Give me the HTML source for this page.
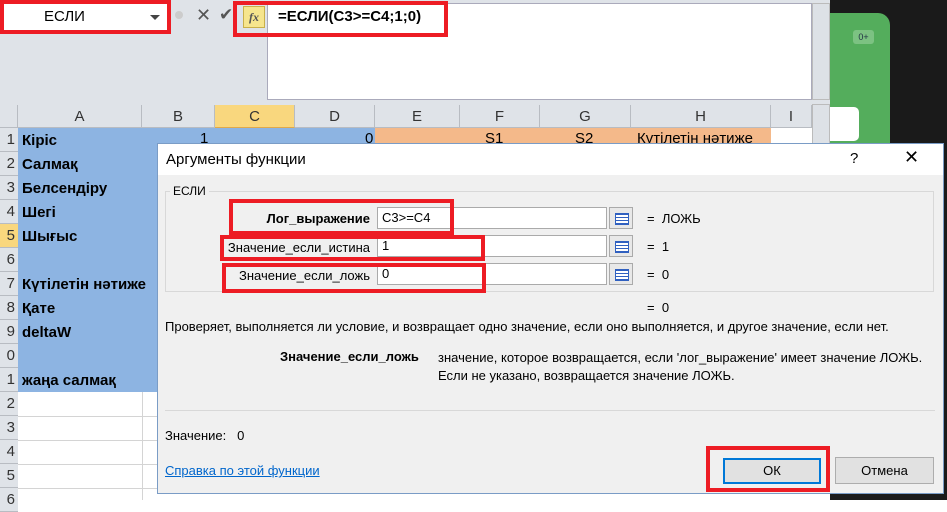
<!DOCTYPE html>
<html><head><meta charset="utf-8"><style>
*{box-sizing:border-box;margin:0;padding:0}
body{width:947px;height:500px;overflow:hidden;position:relative;background:#fff;font-family:"Liberation Sans","DejaVu Sans",sans-serif;font-size:13px}
.a{position:absolute}
.red{position:absolute;border:4px solid #ed1c24}
.ch{position:absolute;top:105px;height:23px;background:#dfe3e8;border-right:1px solid #b8bcc2;border-bottom:1px solid #b8bcc2;text-align:center;line-height:23px;font-size:15px;color:#333}
.rh{position:absolute;left:0;width:18px;height:24px;background:#dfe3e8;border-bottom:1px solid #b8bcc2;font-size:15px;line-height:24px;color:#333;text-align:right;padding-right:3px}
.cell{position:absolute;font-weight:bold;font-size:15px;left:22px}
.lab{position:absolute;font-size:13px;text-align:right}
.inp{position:absolute;background:#fff;border:1px solid #aaa;height:22px;font-size:13px;line-height:20px;padding-left:4px}
.rb{position:absolute;width:24px;height:22px;border:1px solid #aaa;background:#e8e8e8}
.rb:after{content:"";position:absolute;left:5px;top:5px;width:12px;height:10px;background:repeating-linear-gradient(#3060c0 0 1px,#fff 1px 3px);border:1px solid #3060c0}
.eq{position:absolute;font-size:13px}
</style></head><body>
<div class="a" style="left:0;top:0;width:830px;height:105px;background:#dfe3e8"></div>
<div class="a" style="left:267px;top:3px;width:545px;height:97px;background:#fff;border:1px solid #aab"></div>
<div class="a" style="left:2px;top:3px;width:165px;height:28px;background:#fff"></div>
<div class="a" style="left:44px;top:8px;font-size:15px">ЕСЛИ</div>
<div class="a" style="left:150px;top:15px;border-left:5px solid transparent;border-right:5px solid transparent;border-top:5px solid #444"></div>
<div class="red" style="left:0;top:0;width:171px;height:34px"></div>
<div class="a" style="left:175px;top:11px;width:8px;height:8px;border-radius:50%;background:#ccc"></div>
<div class="a" style="left:196px;top:5px;font-size:18px;color:#555">✕</div>
<div class="a" style="left:219px;top:5px;font-size:17px;color:#555">✔</div>
<div class="a" style="left:243px;top:6px;width:22px;height:22px;background:#f6e58d;border:1px solid #c9b04a;font:italic bold 12px 'Liberation Serif',serif;text-align:center;line-height:20px;color:#555">fx</div>
<div class="a" style="left:278px;top:8px;font-size:15px;font-weight:bold">=ЕСЛИ(C3&gt;=C4;1;0)</div>
<div class="red" style="left:233px;top:1px;width:215px;height:36px"></div>
<div class="a" style="left:812px;top:3px;width:18px;height:97px;background:#dde1e6;border:1px solid #bbb"></div>
<div class="a" style="left:812px;top:104px;width:18px;height:40px;background:#dde1e6;border:1px solid #bbb"></div>
<div class="a" style="left:830px;top:0;width:117px;height:500px;background:#1a1a1a"></div>
<div class="a" style="left:830px;top:13px;width:60px;height:130px;background:#54ad5c;border-radius:0 12px 0 0"></div>
<div class="a" style="left:853px;top:30px;width:21px;height:14px;background:#7cc282;border-radius:3px;font-size:9px;color:#234;text-align:center;line-height:14px">0+</div>
<div class="a" style="left:830px;top:107px;width:29px;height:34px;background:#fff;border-radius:0 5px 5px 0"></div>
<div class="ch" style="left:0;width:18px;background:#dfe3e8"></div>
<div class="ch" style="left:18px;width:124px">A</div>
<div class="ch" style="left:142px;width:73px">B</div>
<div class="ch" style="left:215px;width:80px;background:#f9d77e;border-bottom:1px solid #e0a94a">C</div>
<div class="ch" style="left:295px;width:80px">D</div>
<div class="ch" style="left:375px;width:85px">E</div>
<div class="ch" style="left:460px;width:80px">F</div>
<div class="ch" style="left:540px;width:91px">G</div>
<div class="ch" style="left:631px;width:140px">H</div>
<div class="ch" style="left:771px;width:41px">I</div>
<div class="a" style="left:18px;top:128px;width:140px;height:264px;background:#8db4e2"></div>
<div class="a" style="left:142px;top:128px;width:233px;height:24px;background:#8db4e2"></div>
<div class="a" style="left:375px;top:128px;width:396px;height:15px;background:#f4b98a"></div>
<div class="a" style="left:200px;top:130px;font-size:15px">1</div>
<div class="a" style="left:365px;top:130px;font-size:15px">0</div>
<div class="a" style="left:485px;top:130px;font-size:15px">S1</div>
<div class="a" style="left:575px;top:130px;font-size:15px">S2</div>
<div class="a" style="left:637px;top:130px;font-size:15px">Күтілетін нәтиже</div>
<div class="rh" style="top:128px">1</div><div class="rh" style="top:152px">2</div><div class="rh" style="top:176px">3</div><div class="rh" style="top:200px">4</div><div class="rh" style="top:224px;background:#f9d77e">5</div><div class="rh" style="top:248px">6</div><div class="rh" style="top:272px">7</div><div class="rh" style="top:296px">8</div><div class="rh" style="top:320px">9</div><div class="rh" style="top:344px">0</div><div class="rh" style="top:368px">1</div><div class="rh" style="top:392px">2</div><div class="rh" style="top:416px">3</div><div class="rh" style="top:440px">4</div><div class="rh" style="top:464px">5</div><div class="rh" style="top:488px">6</div>
<div class="a" style="left:18px;top:416px;width:139px;height:1px;background:#d4d4d4"></div>
<div class="a" style="left:18px;top:440px;width:139px;height:1px;background:#d4d4d4"></div>
<div class="a" style="left:18px;top:464px;width:139px;height:1px;background:#d4d4d4"></div>
<div class="a" style="left:18px;top:488px;width:139px;height:1px;background:#d4d4d4"></div>
<div class="a" style="left:142px;top:392px;width:1px;height:108px;background:#d4d4d4"></div>
<div class="cell" style="top:132px">Кіріс</div>
<div class="cell" style="top:156px">Салмақ</div>
<div class="cell" style="top:180px">Белсендіру</div>
<div class="cell" style="top:204px">Шегі</div>
<div class="cell" style="top:228px">Шығыс</div>
<div class="cell" style="top:276px">Күтілетін нәтиже</div>
<div class="cell" style="top:300px">Қате</div>
<div class="cell" style="top:324px">deltaW</div>
<div class="cell" style="top:372px">жаңа салмақ</div>
<div class="a" style="left:157px;top:143px;width:787px;height:351px;background:#f0f0f0;border:1px solid #7a9cc6"></div>
<div class="a" style="left:158px;top:144px;width:785px;height:31px;background:#fff"></div>
<div class="a" style="left:166px;top:151px;font-size:15px">Аргументы функции</div>
<div class="a" style="left:850px;top:150px;font-size:15px">?</div>
<div class="a" style="left:904px;top:147px;font-size:18px">✕</div>
<div class="a" style="left:165px;top:191px;width:769px;height:101px;border:1px solid #d8d8d8"></div>
<div class="a" style="left:170px;top:184px;background:#f0f0f0;padding:0 3px;font-size:12px">ЕСЛИ</div>
<div class="lab" style="left:220px;top:211px;width:150px;font-weight:bold">Лог_выражение</div>
<div class="lab" style="left:210px;top:240px;width:160px">Значение_если_истина</div>
<div class="lab" style="left:210px;top:268px;width:160px">Значение_если_ложь</div>
<div class="inp" style="left:377px;top:207px;width:230px">C3&gt;=C4</div>
<div class="inp" style="left:377px;top:235px;width:230px">1</div>
<div class="inp" style="left:377px;top:263px;width:230px">0</div>
<div class="rb" style="left:609px;top:207px"></div>
<div class="rb" style="left:609px;top:235px"></div>
<div class="rb" style="left:609px;top:263px"></div>
<div class="eq" style="left:647px;top:211px">=&nbsp;&nbsp;ЛОЖЬ</div>
<div class="eq" style="left:647px;top:239px">=&nbsp;&nbsp;1</div>
<div class="eq" style="left:647px;top:267px">=&nbsp;&nbsp;0</div>
<div class="eq" style="left:647px;top:300px">=&nbsp;&nbsp;0</div>
<div class="red" style="left:229px;top:199px;width:225px;height:36px"></div>
<div class="red" style="left:220px;top:235px;width:265px;height:26px"></div>
<div class="red" style="left:222px;top:263px;width:264px;height:30px"></div>
<div class="a" style="left:165px;top:319px;font-size:13px">Проверяет, выполняется ли условие, и возвращает одно значение, если оно выполняется, и другое значение, если нет.</div>
<div class="a" style="left:280px;top:349px;font-size:13px;font-weight:bold">Значение_если_ложь</div>
<div class="a" style="left:438px;top:349px;font-size:13px;line-height:18px">значение, которое возвращается, если 'лог_выражение' имеет значение ЛОЖЬ.<br>Если не указано, возвращается значение ЛОЖЬ.</div>
<div class="a" style="left:165px;top:410px;width:770px;height:1px;background:#d8d8d8"></div>
<div class="a" style="left:165px;top:428px;font-size:13px">Значение:&nbsp;&nbsp;&nbsp;0</div>
<div class="a" style="left:165px;top:463px;font-size:13px;color:#0066cc;text-decoration:underline">Справка по этой функции</div>
<div class="a" style="left:723px;top:458px;width:98px;height:26px;background:#e1e1e1;border:2px solid #0078d7;text-align:center;line-height:22px;font-size:13px">ОК</div>
<div class="red" style="left:706px;top:446px;width:124px;height:46px"></div>
<div class="a" style="left:835px;top:457px;width:99px;height:27px;background:#e1e1e1;border:1px solid #adadad;text-align:center;line-height:25px;font-size:13px">Отмена</div>
</body></html>
